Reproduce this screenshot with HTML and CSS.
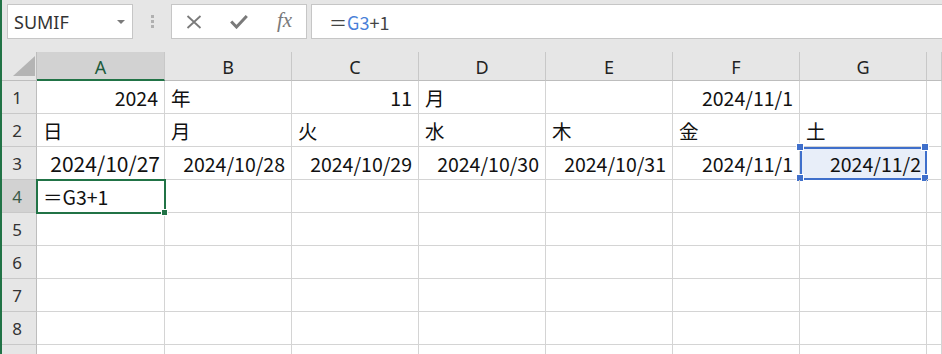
FILE: index.html
```html
<!DOCTYPE html>
<html>
<head>
    <title>Book1 - Excel</title>
    <link rel="stylesheet" href="styles.css">
</head>
<body>
    <div class="app">
        <div class="toolbar">
            <div class="namebox">
                <span>SUMIF</span>
                <span class="caret"></span>
            </div>
            <div class="grip"><i></i><i></i><i></i></div>
            <div class="fxbuttons">
                <svg class="ico" width="16" height="14" viewBox="0 0 16 14">
                    <path d="M1.5 1 L14.5 13 M14.5 1 L1.5 13" stroke="#7a7a7a" stroke-width="1.8" fill="none"/>
                </svg>
                <svg class="ico" width="18" height="14" viewBox="0 0 18 14">
                    <path d="M1.2 6.5 L6.5 12 L16.8 1" stroke="#7a7a7a" stroke-width="3" fill="none"/>
                </svg>
                <span class="fx">fx</span>
            </div>
            <div class="formula">
                <span>＝</span><span class="ref">G3</span><span>+1</span>
            </div>
        </div>

        <div class="sheet">
            <div class="corner"><span class="tri"></span></div>
            <div class="colhead selected">A</div>
            <div class="colhead">B</div>
            <div class="colhead">C</div>
            <div class="colhead">D</div>
            <div class="colhead">E</div>
            <div class="colhead">F</div>
            <div class="colhead">G</div>
            <div class="colhead"></div>

            <div class="rowhead">1</div>
            <div class="cell num">2024</div>
            <div class="cell">年</div>
            <div class="cell num">11</div>
            <div class="cell">月</div>
            <div class="cell"></div>
            <div class="cell num">2024/11/1</div>
            <div class="cell"></div>
            <div class="cell"></div>

            <div class="rowhead">2</div>
            <div class="cell">日</div>
            <div class="cell">月</div>
            <div class="cell">火</div>
            <div class="cell">水</div>
            <div class="cell">木</div>
            <div class="cell">金</div>
            <div class="cell">土</div>
            <div class="cell"></div>

            <div class="rowhead">3</div>
            <div class="cell num big">2024/10/27</div>
            <div class="cell num">2024/10/28</div>
            <div class="cell num">2024/10/29</div>
            <div class="cell num">2024/10/30</div>
            <div class="cell num">2024/10/31</div>
            <div class="cell num">2024/11/1</div>
            <div class="cell num ref-range">
                2024/11/2
                <i class="h tl"></i><i class="h tr"></i><i class="h bl"></i><i class="h br"></i>
            </div>
            <div class="cell"></div>

            <div class="rowhead selected">4</div>
            <div class="cell active">＝G3+1<i class="fill"></i></div>
            <div class="cell"></div>
            <div class="cell"></div>
            <div class="cell"></div>
            <div class="cell"></div>
            <div class="cell"></div>
            <div class="cell"></div>
            <div class="cell"></div>

            <div class="rowhead">5</div>
            <div class="cell"></div><div class="cell"></div><div class="cell"></div><div class="cell"></div>
            <div class="cell"></div><div class="cell"></div><div class="cell"></div><div class="cell"></div>

            <div class="rowhead">6</div>
            <div class="cell"></div><div class="cell"></div><div class="cell"></div><div class="cell"></div>
            <div class="cell"></div><div class="cell"></div><div class="cell"></div><div class="cell"></div>

            <div class="rowhead">7</div>
            <div class="cell"></div><div class="cell"></div><div class="cell"></div><div class="cell"></div>
            <div class="cell"></div><div class="cell"></div><div class="cell"></div><div class="cell"></div>

            <div class="rowhead">8</div>
            <div class="cell"></div><div class="cell"></div><div class="cell"></div><div class="cell"></div>
            <div class="cell"></div><div class="cell"></div><div class="cell"></div><div class="cell"></div>

            <!-- row 9 is cut off by the window, only its lines show -->
            <div class="rowhead"></div>
            <div class="cell"></div><div class="cell"></div><div class="cell"></div><div class="cell"></div>
            <div class="cell"></div><div class="cell"></div><div class="cell"></div><div class="cell"></div>
        </div>
    </div>
</body>
</html>
```

FILE: styles.css
```css
body {
    margin: 0;
    padding: 0;
    overflow: hidden;
    background: #fff;
    font-family: "Noto Sans CJK JP", sans-serif;
}
.app {
    width: 942px;
    height: 354px;
    border-left: 2px solid #217346;
    box-sizing: border-box;
    overflow: hidden;
}
.toolbar {
    height: 52px;
    background: #e6e6e6;
    display: flex;
    align-items: flex-start;
    padding-top: 4px;
    box-sizing: border-box;
}
.namebox {
    margin-left: 5px;
    width: 126px;
    height: 35px;
    box-sizing: border-box;
    background: #fff;
    border: 1px solid #c6c6c6;
    display: flex;
    align-items: center;
    justify-content: space-between;
    padding: 0 7px 0 6px;
    font-family: "Noto Sans", sans-serif;
    font-size: 18px;
    color: #333;
}
.caret {
    width: 0;
    height: 0;
    border-left: 4px solid transparent;
    border-right: 4px solid transparent;
    border-top: 4px solid #7a7a7a;
}
.grip {
    width: 38px;
    height: 35px;
    display: flex;
    flex-direction: column;
    align-items: center;
    justify-content: center;
    gap: 2px;
}
.grip i {
    width: 3px;
    height: 3px;
    background: #b0b0b0;
}
.fxbuttons {
    width: 136px;
    height: 35px;
    box-sizing: border-box;
    background: #fff;
    border: 1px solid #c6c6c6;
    display: flex;
    align-items: center;
    padding-left: 14px;
    gap: 28px;
}
.fx {
    font-family: "Liberation Serif", serif;
    font-style: italic;
    font-size: 21px;
    color: #7a7a7a;
    margin-left: 1px;
    margin-top: -2px;
}
.formula {
    flex: 1;
    margin-left: 4px;
    height: 35px;
    box-sizing: border-box;
    background: #fff;
    border: 1px solid #c6c6c6;
    border-right: none;
    display: flex;
    align-items: center;
    padding-left: 17px;
    font-size: 18px;
    color: #444;
}
.formula .ref {
    color: #4a7fd8;
}

.sheet {
    display: grid;
    grid-template-columns: 35px 128px repeat(6, 127px) 1fr;
    grid-template-rows: 29px repeat(9, 33px);
}
.corner {
    background: #e6e6e6;
    border-right: 1px solid #bdbdbd;
    border-bottom: 1px solid #bdbdbd;
    position: relative;
}
.tri {
    position: absolute;
    right: 1px;
    bottom: 4px;
    width: 0;
    height: 0;
    border-left: 22px solid transparent;
    border-bottom: 20px solid #b4b4b4;
}
.colhead {
    background: #e6e6e6;
    border-right: 1px solid #c8c8c8;
    border-bottom: 1px solid #bdbdbd;
    display: flex;
    align-items: center;
    justify-content: center;
    font-family: "Noto Sans", sans-serif;
    font-size: 18px;
    color: #222;
    padding-top: 2px;
    box-sizing: border-box;
}
.colhead.selected {
    background: #d2d2d2;
    border-bottom: 2px solid #217346;
    color: #1d5b3c;
}
.rowhead {
    background: #e6e6e6;
    border-right: 1px solid #bdbdbd;
    border-bottom: 1px solid #c8c8c8;
    display: flex;
    align-items: center;
    justify-content: center;
    font-family: "Noto Sans", sans-serif;
    font-size: 17px;
    color: #333;
    padding-right: 4px;
    box-sizing: border-box;
}
.rowhead.selected {
    background: #d2d2d2;
    color: #3a5a48;
}
.cell {
    border-right: 1px solid #d4d4d4;
    border-bottom: 1px solid #d4d4d4;
    display: flex;
    align-items: center;
    padding: 0 6px;
    font-size: 19.5px;
    color: #111;
    white-space: nowrap;
    position: relative;
    box-sizing: border-box;
}
.cell.num {
    justify-content: flex-end;
}
.cell.big {
    font-size: 21px;
    padding-right: 4px;
}
.ref-range {
    background: #e8eef9;
    outline: 2px solid #3f6fcb;
    outline-offset: -2px;
    padding-right: 5px;
}
.h {
    position: absolute;
    width: 6px;
    height: 6px;
    background: #3f6fcb;
    border: 1px solid #fff;
}
.tl { left: -4px; top: -4px; }
.tr { right: -3px; top: -4px; }
.bl { left: -4px; bottom: -3px; }
.br { right: -3px; bottom: -3px; }
.active {
    outline: 2px solid #217346;
    outline-offset: -1px;
    z-index: 2;
}
.fill {
    position: absolute;
    right: -4px;
    bottom: -4px;
    width: 5px;
    height: 5px;
    background: #217346;
    border: 1px solid #fff;
}
```
